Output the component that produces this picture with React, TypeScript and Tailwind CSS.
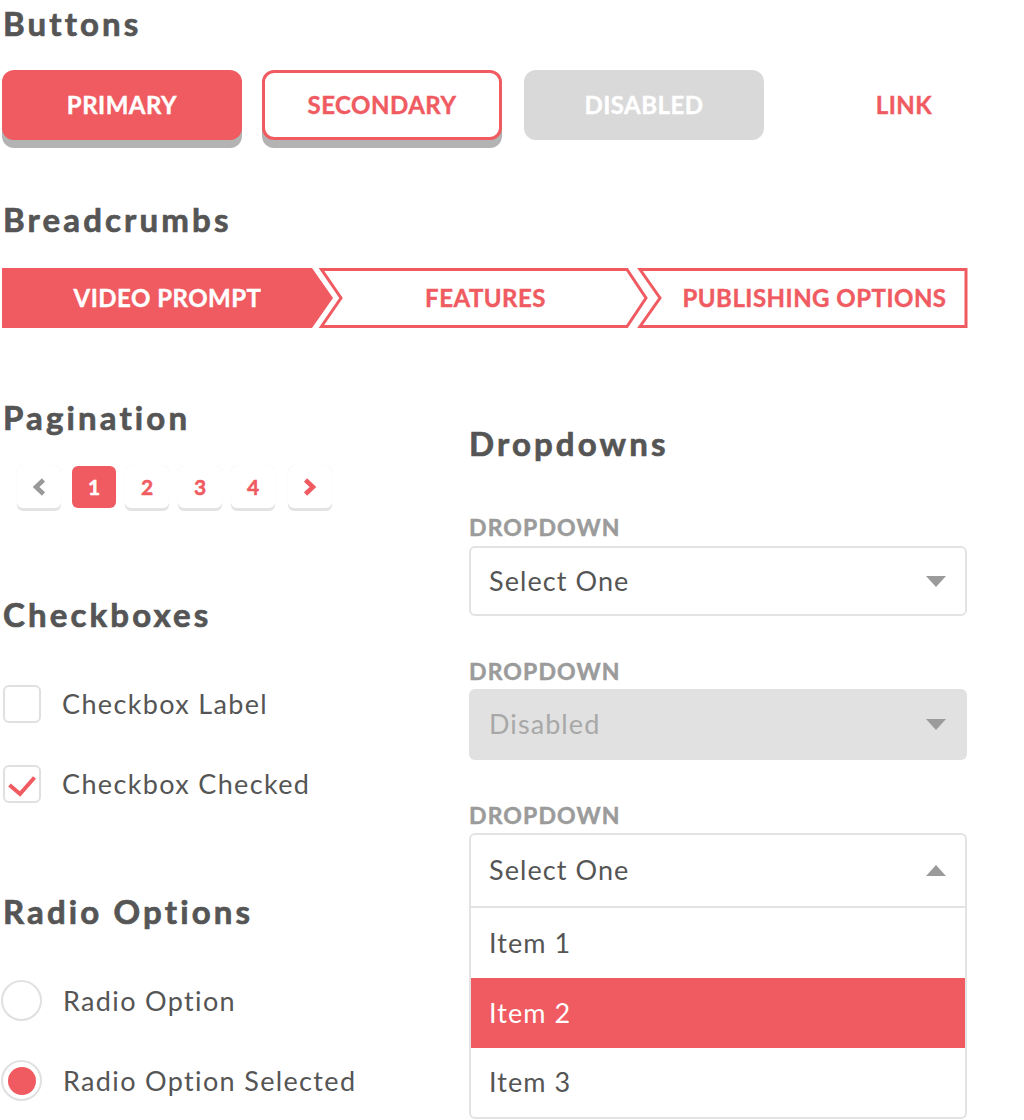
import React from "react";

const RED = "#f05a61";

const Title: React.FC<{ children: React.ReactNode; className?: string }> = ({ children, className = "" }) => (
  <h2
    className={`text-[33px] leading-[38px] font-bold tracking-[0.095em] text-[#555555] [-webkit-text-stroke:0.7px_#555555] ${className}`}
  >
    {children}
  </h2>
);

const Buttons = () => (
  <div className="mt-[28px] flex gap-[20px] pl-[2px] text-[24px] font-bold tracking-[0.02em] [-webkit-text-stroke:0.4px_currentColor]">
    <button className="h-[70px] w-[240px] rounded-[12px] bg-[#f05a61] text-white shadow-[0_8px_0_#b3b3b3]">
      PRIMARY
    </button>
    <button className="h-[70px] w-[240px] rounded-[12px] border-[3px] border-[#f05a61] bg-white text-[#f05a61] shadow-[0_8px_0_#b3b3b3]">
      SECONDARY
    </button>
    <button className="ml-[2px] h-[70px] w-[240px] rounded-[12px] bg-[#d9d9d9] text-white">DISABLED</button>
    <button className="h-[70px] w-[240px] text-[#f05a61]">LINK</button>
  </div>
);

const Breadcrumbs = () => (
  <div className="relative mt-[30px] h-[60px] w-[968px]">
    <svg className="absolute inset-0" width="968" height="60" viewBox="0 0 968 60">
      <polygon points="2,0 312,0 333,30 312,60 2,60" fill={RED} />
      <polygon
        points="321.5,1.5 627,1.5 646,30 627,58.5 321.5,58.5 341,30"
        fill="none"
        stroke={RED}
        strokeWidth="3"
      />
      <polygon
        points="640,1.5 966,1.5 966,58.5 640,58.5 660,30"
        fill="none"
        stroke={RED}
        strokeWidth="3"
      />
    </svg>
    <div className="relative flex h-full items-center text-[24px] font-bold tracking-[0.02em] [-webkit-text-stroke:0.4px_currentColor]">
      <span className="ml-[2px] w-[331px] text-center text-white">VIDEO PROMPT</span>
      <span className="ml-[10px] w-[285px] text-center text-[#f05a61]">FEATURES</span>
      <span className="ml-[34px] w-[305px] text-center text-[#f05a61]">PUBLISHING OPTIONS</span>
    </div>
  </div>
);

const PageBtn: React.FC<{ children: React.ReactNode; active?: boolean; className?: string }> = ({
  children,
  active,
  className = "",
}) => (
  <div
    className={`flex h-[42px] w-[44px] items-center justify-center rounded-[6px] text-[21px] font-bold [-webkit-text-stroke:0.5px_currentColor] ${
      active
        ? "bg-[#f05a61] text-white"
        : "bg-white text-[#f05a61] shadow-[0_3px_0_#e3e3e3,0_0_1px_#e6e6e6]"
    } ${className}`}
  >
    {children}
  </div>
);

const Pagination = () => (
  <div className="mt-[30px] flex items-center pl-[17px]">
    <PageBtn>
      <svg width="18" height="20" viewBox="0 0 18 20">
        <path d="M13.5 3 L6 10 L13.5 17" fill="none" stroke="#999999" strokeWidth="4.5" />
      </svg>
    </PageBtn>
    <PageBtn active className="ml-[11px]">1</PageBtn>
    <PageBtn className="ml-[9px]">2</PageBtn>
    <PageBtn className="ml-[9px]">3</PageBtn>
    <PageBtn className="ml-[9px]">4</PageBtn>
    <PageBtn className="ml-[13px]">
      <svg width="18" height="20" viewBox="0 0 18 20">
        <path d="M4.5 3 L12 10 L4.5 17" fill="none" stroke={RED} strokeWidth="4.5" />
      </svg>
    </PageBtn>
  </div>
);

const Checkbox: React.FC<{ label: string; checked?: boolean; className?: string }> = ({
  label,
  checked,
  className = "",
}) => (
  <div className={`flex items-center pl-[3px] ${className}`}>
    <div className="relative h-[38px] w-[38px] rounded-[6px] border-2 border-[#e0e0e0] bg-white">
      {checked && (
        <svg className="absolute left-[-2px] top-[-2px]" width="38" height="38" viewBox="0 0 38 38">
          <path d="M6.5 20 L17 29 L31.5 12.5" fill="none" stroke={RED} strokeWidth="4" />
        </svg>
      )}
    </div>
    <span className="ml-[21px] text-[27px] leading-[38px] tracking-[0.05em] text-[#555555]">{label}</span>
  </div>
);

const Radio: React.FC<{ label: string; checked?: boolean; className?: string }> = ({
  label,
  checked,
  className = "",
}) => (
  <div className={`flex items-center pl-[1px] ${className}`}>
    <div className="flex h-[41px] w-[41px] items-center justify-center rounded-full border-2 border-[#e0e0e0] bg-white">
      {checked && <div className="h-[28px] w-[28px] rounded-full bg-[#f05a61]" />}
    </div>
    <span className="ml-[21px] text-[27px] leading-[41px] tracking-[0.05em] text-[#555555]">{label}</span>
  </div>
);

const Caret: React.FC<{ up?: boolean }> = ({ up }) => (
  <svg width="20" height="11" viewBox="0 0 20 11">
    {up ? <polygon points="0,11 20,11 10,0" fill="#9b9b9b" /> : <polygon points="0,0 20,0 10,11" fill="#9b9b9b" />}
  </svg>
);

const Label: React.FC<{ className?: string }> = ({ className = "" }) => (
  <div
    className={`text-[23px] leading-[26px] font-bold tracking-[0.05em] text-[#9b9b9b] [-webkit-text-stroke:0.5px_#9b9b9b] ${className}`}
  >
    DROPDOWN
  </div>
);

const Dropdowns = () => (
  <div className="pt-[26px]">
    <Title>Dropdowns</Title>
    <Label className="mt-[52px]" />
    <div className="mt-[6px] flex h-[70px] items-center justify-between rounded-[6px] border-2 border-[#e3e3e3] bg-white pl-[18px] pr-[19px]">
      <span className="text-[27px] tracking-[0.04em] text-[#555555]">Select One</span>
      <Caret />
    </div>
    <Label className="mt-[42px]" />
    <div className="mt-[5px] flex h-[71px] items-center justify-between rounded-[6px] bg-[#e1e1e1] pl-[20px] pr-[21px]">
      <span className="text-[27px] tracking-[0.04em] text-[#a8a8a8]">Disabled</span>
      <Caret />
    </div>
    <Label className="mt-[42px]" />
    <div className="mt-[5px] overflow-hidden rounded-[6px] border-2 border-[#e3e3e3] bg-white text-[27px] tracking-[0.04em]">
      <div className="flex h-[73px] items-center justify-between border-b-2 border-[#e3e3e3] pl-[18px] pr-[19px]">
        <span className="text-[#555555]">Select One</span>
        <Caret up />
      </div>
      <div className="flex h-[70px] items-center pl-[18px] text-[#555555]">Item 1</div>
      <div className="flex h-[70px] items-center bg-[#f05a61] pl-[18px] text-white">Item 2</div>
      <div className="flex h-[69px] items-center pl-[18px] text-[#555555]">Item 3</div>
    </div>
  </div>
);

export default function App() {
  return (
    <div className="h-[1120px] w-[1024px] overflow-hidden bg-white pt-[4px] font-['Lato',sans-serif]">
      <Title className="pl-[3px]">Buttons</Title>
      <Buttons />
      <Title className="mt-[60px] pl-[3px]">Breadcrumbs</Title>
      <Breadcrumbs />
      <div className="mt-[70px] grid grid-cols-[469px_498px]">
        <div>
          <Title className="pl-[3px]">Pagination</Title>
          <Pagination />
          <Title className="mt-[87px] pl-[3px]">Checkboxes</Title>
          <Checkbox label="Checkbox Label" className="mt-[52px]" />
          <Checkbox label="Checkbox Checked" checked className="mt-[42px]" />
          <Title className="mt-[89px] pl-[3px]">Radio Options</Title>
          <Radio label="Radio Option" className="mt-[50px]" />
          <Radio label="Radio Option Selected" checked className="mt-[39px]" />
        </div>
        <Dropdowns />
      </div>
    </div>
  );
}
